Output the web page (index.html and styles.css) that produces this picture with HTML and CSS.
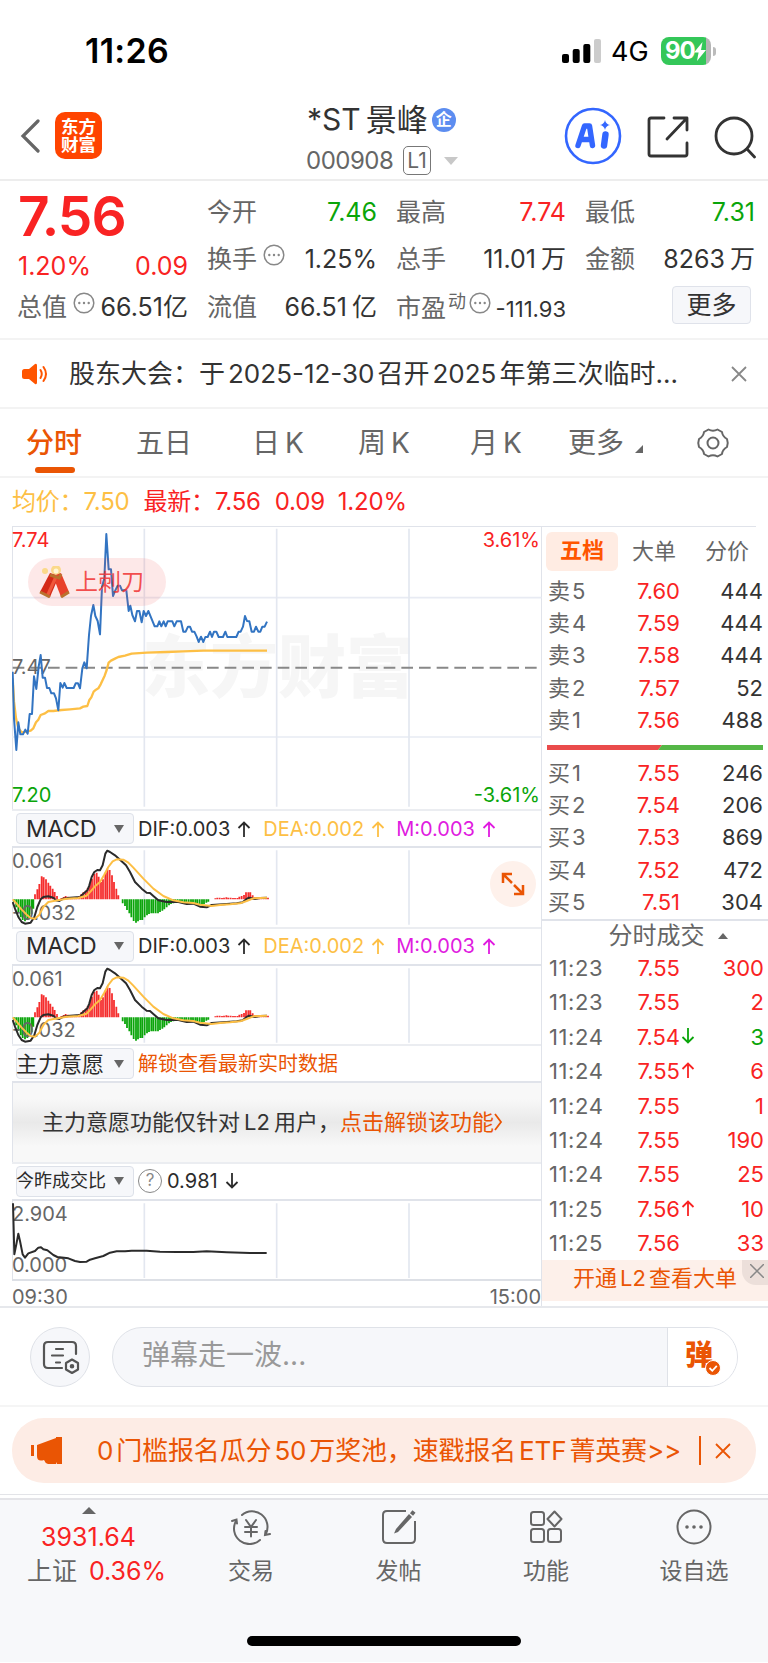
FILE: index.html
```html
<!doctype html>
<html lang="zh-CN">
<head>
    <meta charset="UTF-8">
    <title>*ST景峰 000908</title>
    <link rel="stylesheet" href="styles.css">
</head>
<body>

<!-- status bar -->
<div class="status">
    <span class="clock">11:26</span>
    <svg class="signal" width="39" height="24" viewBox="0 0 39 24">
        <rect x="0" y="15" width="7" height="9" rx="2"/>
        <rect x="10.7" y="10" width="7" height="14" rx="2"/>
        <rect x="21.3" y="5" width="7" height="19" rx="2"/>
        <rect x="32" y="0" width="7" height="24" rx="2" fill="#ccc"/>
    </svg>
    <span class="net">4G</span>
    <div class="battery">
        <b>90</b>
        <svg width="12" height="19" viewBox="0 0 12 19"><path d="M8.5 0L0 10.5h4.6L3 19l9-11H7z" fill="#fff"/></svg>
    </div>
    <i class="nub"></i>
</div>

<!-- title bar -->
<div class="header">
    <svg class="back" width="20" height="34" viewBox="0 0 20 34"><path d="M18 2L3 17l15 15" fill="none" stroke="#666" stroke-width="3.2" stroke-linecap="round"/></svg>
    <div class="logo">东方<br>财富</div>
    <div class="stock">
        <div class="name"><span>*ST</span><span class="cn">景峰</span><em>企</em></div>
        <div class="code"><span>000908</span><i>L1</i><b></b></div>
    </div>
    <div class="tools">
        <svg width="58" height="58" viewBox="0 0 58 58">
            <circle cx="29" cy="29" r="27" fill="none" stroke="#36f" stroke-width="2.6"/>
            <path d="M14 38.5L20.5 19h5l3 19.5M17.5 32.5h9" fill="none" stroke="#36f" stroke-width="5.4" stroke-linejoin="round" stroke-linecap="round"/>
            <path d="M41.5 27.5L40 38.5" stroke="#36f" stroke-width="6.4" stroke-linecap="round"/>
            <path d="M41 13q.8 4.200 5 5q-4.200.8-5 5q-.8-4.200-5-5q4.200-.8 5-5z" fill="#36f"/>
        </svg>
        <svg class="share" width="42" height="42" viewBox="0 0 42 42" fill="none" stroke="#333" stroke-width="2.8" stroke-linecap="round" stroke-linejoin="round">
            <path d="M17 2H4q-2 0-2 2v34q0 2 2 2h34q2 0 2-2V27M27 2h13v12M39 3L20 23"/>
        </svg>
        <svg class="search" width="42" height="44" viewBox="0 0 42 44" fill="none" stroke="#333" stroke-width="2.8" stroke-linecap="round">
            <circle cx="20" cy="20" r="18"/><path d="M33 33l7.500 8"/>
        </svg>
    </div>
</div>

<!-- quote -->
<div class="quote">
    <div class="main-price">
        <div class="price red">7.56</div>
        <div class="change red"><span>1.20%</span><span>0.09</span></div>
        <div class="cell"><label>总值</label><svg class="tip"><use href="#dots"/></svg><span>66.51<u>亿</u></span></div>
    </div>
    <div class="cells">
        <div class="cell"><label>今开</label><span class="green">7.46</span></div>
        <div class="cell"><label>最高</label><span class="red">7.74</span></div>
        <div class="cell"><label>最低</label><span class="green">7.31</span></div>
        <div class="cell"><label>换手</label><svg class="tip"><use href="#dots"/></svg><span>1.25%</span></div>
        <div class="cell"><label>总手</label><span>11.01<u>万</u></span></div>
        <div class="cell"><label>金额</label><span>8263<u>万</u></span></div>
        <div class="cell"><label>流值</label><span>66.51<u>亿</u></span></div>
        <div class="cell pe"><label>市盈<sup>动</sup></label><svg class="tip"><use href="#dots"/></svg><span>-111.93</span></div>
        <div class="cell"><button class="more">更多</button></div>
    </div>
</div>

<!-- notice -->
<div class="notice">
    <svg width="26" height="22" viewBox="0 0 26 22"><path d="M2.500 6H7l6-5q2-1 2 1.500v17q0 2.500-2 1.500l-6-5H2.500Q0 16 0 13.500v-5Q0 6 2.500 6z" fill="#ff5500"/><path d="M18.500 7q2.500 4 0 8M21.500 4q5 7 0 14" fill="none" stroke="#ff5500" stroke-width="2" stroke-linecap="round"/></svg>
    <p>股东大会：于<s></s>2025-12-30<s></s>召开<s></s>2025<s></s>年第三次临时...</p>
    <svg class="x" width="16" height="16" viewBox="0 0 16 16"><path d="M1 1l14 14M15 1L1 15" stroke="#888" stroke-width="1.8"/></svg>
</div>

<!-- period tabs -->
<div class="tabs">
    <span class="on">分时</span>
    <span>五日</span>
    <span>日<s></s>K</span>
    <span>周<s></s>K</span>
    <span>月<s></s>K</span>
    <span class="drop">更多</span>
    <svg width="34" height="32" viewBox="0 0 34 32" fill="none" stroke="#666" stroke-width="2">
        <path d="M12.500 2.500Q17 5 21.500 2.500L26 5Q26.500 9.500 31 12Q32.500 16 31 20Q26.500 22.500 26 27L21.500 29.500Q17 27 12.500 29.500L8 27Q7.500 22.500 3 20Q1.500 16 3 12Q7.500 9.500 8 5z" stroke-linejoin="round"/>
        <circle cx="17" cy="16" r="5.5"/>
    </svg>
</div>

<div class="info">
    <span class="avg">均价：</span><span class="avg n1">7.50</span>
    <span class="red n2">最新：</span><span class="red n3">7.56</span>
    <span class="red n4">0.09</span><span class="red n5">1.20%</span>
</div>

<div class="board">
    <div class="charts">
        <!-- minute line -->
        <div class="chart minute">
            <div class="watermark">东方财富</div>
            <svg width="530" height="282" viewBox="36 36 1590 846" fill="none">
                <path d="M36 248H1625M36 666H1625" stroke="#e8ebf3" stroke-width="5"/>
                <path d="M433 41V875M830 41V875M1227 41V875" stroke="#e3e7f0" stroke-width="5"/>
                <path d="M38 458H1615" stroke="#888" stroke-width="6" stroke-dasharray="35 18"/>
            </svg>
            <span class="lab tl red">7.74</span><span class="lab tr red">3.61%</span>
            <span class="lab mid">7.47</span>
            <span class="lab bl green">7.20</span><span class="lab br green">-3.61%</span>
            <svg width="530" height="282" viewBox="36 36 1590 846" fill="none" stroke-linejoin="round">
                <path stroke="#fdbf45" stroke-width="7" d="M38 490L42 560 48 610 55 640 65 652 80 650 92 647 100 640 108 622 115 614 122 600 135 595 145 588 160 588 185 585 210 583 240 580 250 575 262 573 268 555 274 547 281 530 288 524 295 520 302 508 308 495 314 482 320 465 326 443 333 437 345 431 355 426 375 422 395 416 440 413 500 411 550 409 610 407 801 407"/>
                <path stroke="#3274c2" stroke-width="6" d="M38 470L42 610 49 705 55 622 61 658 69 658 76 644 83 656 89 597 96 597 102 484 109 522 116 455 122 420 128 488 135 488 141 519 148 519 154 535 162 535 168 550 175 586 181 504 188 518 193 504 200 519 221 519 227 505 234 505 240 520 247 460 253 442 260 460 267 360 273 303 280 270 286 303 293 318 300 358 306 215 313 190 319 57 326 163 333 163 339 243 346 226 353 212 360 212 366 226 379 226 386 288 391 272 397 300 405 319 411 288 418 288 425 322 431 288 438 303 445 288 452 305 464 334 472 334 478 319 484 334 491 319 497 334 503 319 517 319 523 334 530 319 543 319 550 350 557 350 564 335 570 335 576 350 583 350 590 365 596 381 603 365 610 381 616 366 623 366 630 350 636 366 642 350 649 350 656 366 669 366 676 350 682 366 709 366 716 350 722 350 729 335 735 303 741 318 748 319 755 350 762 350 768 335 775 350 781 350 787 335 794 335 801 320"/>
            </svg>
            <div class="signal-tag">
                <svg width="31" height="32" viewBox="0 0 31 32">
                    <g fill="#fbd98a"><circle cx="6" cy="5" r="3"/><circle cx="17" cy="4" r="5"/></g>
                    <circle cx="17" cy="5" r="2.5" fill="#fff7d8"/>
                    <path d="M11 7l9 3-9 21-10-5z" fill="#d42a18"/><path d="M14 10l8-3 8 19-8 5z" fill="#e8402a"/>
                    <path d="M16 9l3 1-9 20-3-1z" fill="#f0583c"/>
                    <path d="M1 26l10 5M30 26l-8 5M11 9l9 3 2-4" stroke="#b9722e" stroke-width="3" fill="none"/>
                </svg>
                <span>上刺刀</span>
            </div>
        </div>

        <div class="bar">
            <div class="pick">MACD</div>
            <span class="v dif">DIF:0.003 <svg class="arr"><use href="#up"/></svg></span>
            <span class="v dea">DEA:0.002 <svg class="arr"><use href="#up"/></svg></span>
            <span class="v m">M:0.003 <svg class="arr"><use href="#up"/></svg></span>
        </div>
        <div class="chart">
            <svg width="530" height="78" viewBox="36 128 1590 234"><use href="#macd-grid"/><use href="#macd"/></svg>
            <span class="lab tl">0.061</span><span class="lab bl">-0.032</span>
            <svg width="530" height="78" viewBox="36 128 1590 234"><use href="#macd-lines"/></svg>
            <div class="expand"><svg width="24" height="24" viewBox="0 0 24 24" fill="none" stroke="#ea5504" stroke-width="2.5"><path d="M11 2H2v9M2 2l9 9M13 22h9v-9M22 22l-9-9"/></svg></div>
        </div>

        <div class="bar">
            <div class="pick">MACD</div>
            <span class="v dif">DIF:0.003 <svg class="arr"><use href="#up"/></svg></span>
            <span class="v dea">DEA:0.002 <svg class="arr"><use href="#up"/></svg></span>
            <span class="v m">M:0.003 <svg class="arr"><use href="#up"/></svg></span>
        </div>
        <div class="chart">
            <svg width="530" height="78" viewBox="36 128 1590 234"><use href="#macd-grid"/><use href="#macd"/></svg>
            <span class="lab tl">0.061</span><span class="lab bl">-0.032</span>
            <svg width="530" height="78" viewBox="36 128 1590 234"><use href="#macd-lines"/></svg>
        </div>

        <div class="bar">
            <div class="pick cn">主力意愿</div>
            <span class="unlock">解锁查看最新实时数据</span>
        </div>
        <div class="chart locked">
            <span>主力意愿功能仅针对<s></s>L2<s></s>用户，</span><a>点击解锁该功能</a>
            <svg width="9" height="18" viewBox="0 0 9 18"><path d="M1 1l6 8-6 8" fill="none" stroke="#ea5504" stroke-width="1.8"/></svg>
        </div>

        <div class="bar">
            <div class="pick small">今昨成交比</div>
            <div class="ask">?</div>
            <span class="v ratio">0.981 <svg class="arr"><use href="#down"/></svg></span>
        </div>
        <div class="chart">
            <svg width="530" height="79" viewBox="36 480 1590 237" fill="none">
                <path d="M433 487V711M830 487V711M1227 487V711" stroke="#e3e7f0" stroke-width="5"/>
            </svg>
            <span class="lab tl">2.904</span><span class="lab bl">0.000</span>
            <svg width="530" height="79" viewBox="36 480 1590 237" fill="none" stroke-linejoin="round">
                <path stroke="#2b2b2b" stroke-width="6" d="M39 487L43 640 49 610 55 578 60 600 68 640 75 650 85 637 105 630 115 620 123 619 130 625 142 628 160 642 172 648 205 652 225 660 240 663 260 662 270 656 285 652 310 645 330 635 350 631 375 631 395 629 440 629 480 632 530 633 580 633 620 631 680 634 750 636 800 636"/>
            </svg>
        </div>
        <div class="axis"><span>09:30</span><span>15:00</span></div>
    </div>

    <div class="side">
        <div class="side-tabs"><b>五档</b><span>大单</span><span>分价</span></div>
        <div class="book">
            <div><i>卖<s></s>5</i><span>7.60</span><em>444</em></div>
            <div><i>卖<s></s>4</i><span>7.59</span><em>444</em></div>
            <div><i>卖<s></s>3</i><span>7.58</span><em>444</em></div>
            <div><i>卖<s></s>2</i><span>7.57</span><em>52</em></div>
            <div><i>卖<s></s>1</i><span>7.56</span><em>488</em></div>
        </div>
        <svg class="ratio-bar" width="216" height="5" viewBox="0 0 216 5"><path d="M0 0H115L111 5H0z" fill="#ea4b4b"/><path d="M115 0H216V5H111z" fill="#55b747"/></svg>
        <div class="book">
            <div><i>买<s></s>1</i><span>7.55</span><em>246</em></div>
            <div><i>买<s></s>2</i><span>7.54</span><em>206</em></div>
            <div><i>买<s></s>3</i><span>7.53</span><em>869</em></div>
            <div><i>买<s></s>4</i><span>7.52</span><em>472</em></div>
            <div><i>买<s></s>5</i><span>7.51</span><em>304</em></div>
        </div>
        <div class="deal-title">分时成交<b></b></div>
        <div class="book deals">
            <div><i>11:23</i><span>7.55</span><em>300</em></div>
            <div><i>11:23</i><span>7.55</span><em>2</em></div>
            <div><i>11:24</i><span>7.54<svg class="arr green"><use href="#down"/></svg></span><em class="green">3</em></div>
            <div><i>11:24</i><span>7.55<svg class="arr"><use href="#up"/></svg></span><em>6</em></div>
            <div><i>11:24</i><span>7.55</span><em>1</em></div>
            <div><i>11:24</i><span>7.55</span><em>190</em></div>
            <div><i>11:24</i><span>7.55</span><em>25</em></div>
            <div><i>11:25</i><span>7.56<svg class="arr"><use href="#up"/></svg></span><em>10</em></div>
            <div><i>11:25</i><span>7.56</span><em>33</em></div>
        </div>
        <div class="l2">开通<s></s>L2<s></s>查看大单
            <div class="l2-close"><svg width="14" height="14" viewBox="0 0 14 14"><path d="M0 0l14 14M14 0L0 14" stroke="#888" stroke-width="1.5"/></svg></div>
        </div>
    </div>
</div>

<!-- barrage input -->
<div class="barrage">
    <div class="round">
        <svg width="38" height="34" viewBox="0 0 38 34" fill="none" stroke="#555" stroke-width="2.2" stroke-linecap="round">
            <path d="M20 28H6q-4 0-4-4V6q0-4 4-4h24q4 0 4 4v8M14 9h7M10 15.500h11M14 22.500h4"/>
            <path d="M30 19.500l6 3.500v6.500L30 33l-6-3.500V23z" stroke-linejoin="round"/><circle cx="30" cy="26.3" r="1.2"/>
        </svg>
    </div>
    <div class="field">
        <span>弹幕走一波...</span>
        <div class="send">弹<svg width="16" height="16" viewBox="0 0 16 16"><circle cx="8" cy="8" r="7.5" fill="#ea5504" stroke="#fff"/><path d="M4.500 8l2.800 2.800 4.500-5" fill="none" stroke="#fff" stroke-width="1.8"/></svg></div>
    </div>
</div>

<div class="promo-wrap">
    <div class="promo">
        <svg width="31" height="27" viewBox="0 0 31 27" fill="#ea5504"><path d="M0 8h3v11H0zM6 8l19-7V0h6v27h-5l-1-2v2q-10 2-12-4-7 2-7-4z"/></svg>
        <p>0<s></s>门槛报名瓜分<s></s>50<s></s>万奖池，速戳报名<s></s>ETF<s></s>菁英赛&gt;&gt;</p>
        <i></i>
        <svg class="x" width="16" height="16" viewBox="0 0 16 16"><path d="M1 1l14 14M15 1L1 15" stroke="#ea5504" stroke-width="1.8"/></svg>
    </div>
</div>

<!-- bottom nav -->
<div class="nav">
    <div class="index"><b></b><span class="red">3931.64</span><p>上证<span class="red">0.36%</span></p></div>
    <div class="item">
        <svg width="40" height="36" viewBox="0 0 40 36" fill="none" stroke="#666" stroke-width="2" stroke-linecap="round">
            <path d="M11 6A15.500 15.500 0 0 1 35 24.500M39 25l-5 1 .5-4M29 31A15.500 15.500 0 0 1 5 12M1 12l4.500-1.500.500 4"/>
            <path d="M15 11l5 7 5-7M14 18h12M14 23h12M20 18v9.500"/>
        </svg>
        <span>交易</span>
    </div>
    <div class="item">
        <svg width="36" height="36" viewBox="0 0 36 36" fill="none" stroke="#666" stroke-width="2">
            <path d="M25 2H6Q2 2 2 6v24q0 4 4 4h24q4 0 4-4V12"/>
            <path d="M28 5l3 3-14 15-4 1.500 2-4.500z" fill="#666" stroke="none"/><path d="M30.500 5.500l2.500-3" stroke-width="4"/>
        </svg>
        <span>发帖</span>
    </div>
    <div class="item">
        <svg width="34" height="36" viewBox="0 0 34 36" fill="none" stroke="#666" stroke-width="2">
            <rect x="2" y="3" width="13" height="13" rx="2.5"/><rect x="2" y="20" width="13" height="13" rx="2.5"/><rect x="19" y="20" width="13" height="13" rx="2.5"/>
            <path d="M25.500 2.500l7 7.500-7 7.500-7-7.500z" stroke-linejoin="round"/>
        </svg>
        <span>功能</span>
    </div>
    <div class="item">
        <svg width="36" height="36" viewBox="0 0 36 36" fill="none" stroke="#666" stroke-width="2">
            <circle cx="18" cy="18" r="16.5"/><path d="M11 18h.01M18 18h.01M25 18h.01" stroke-width="3.6" stroke-linecap="round"/>
        </svg>
        <span>设自选</span>
    </div>
    <div class="home"></div>
</div>

<!-- shared shapes -->
<svg class="defs">
    <symbol id="dots" viewBox="0 0 22 22"><circle cx="11" cy="11" r="9.8" fill="none" stroke="#888" stroke-width="1.5"/><path d="M6.300 11h.01M11 11h.01M15.700 11h.01" stroke="#888" stroke-width="2.4" stroke-linecap="round"/></symbol>
    <symbol id="up" viewBox="0 0 14 16"><path d="M7 16V1.500M1.500 7L7 1.500 12.500 7" fill="none" stroke="currentColor" stroke-width="1.8"/></symbol>
    <symbol id="down" viewBox="0 0 14 16"><path d="M7 0V14.500M1.500 9L7 14.500 12.500 9" fill="none" stroke="currentColor" stroke-width="1.8"/></symbol>
    <g id="macd-grid"><path d="M433 135V358M830 135V358M1227 135V358" stroke="#e3e7f0" stroke-width="5"/></g>
    <g id="macd" fill="none">
        <path stroke="#0aa50a" stroke-width="5.4" d="M42 282v8M48.600 282v24M55 282v40M62 282v54M68 282v62M75 282v66M82 282v62M88 282v56M95 282v45M100 282v28M368 282v12M375 282v20M381 282v32M388 282v42M394 282v54M401 282v65M408 282v70M414 282v66M421 282v62M427 282v62M434 282v54M441 282v48M447 282v44M454 282v42M460 282v42M467 282v42M474 282v42M480 282v38M487 282v34M493 282v30M500 282v24M507 282v18M513 282v14M520 282v12M526 282v10M533 282v9M540 282v9M546 282v9M553 282v10M559 282v12M566 282v12M573 282v13M579 282v14M586 282v17M592 282v18M599 282v18M606 282v18M612 282v14M619 282v10M625 282v7"/>
        <path stroke="#f52d2d" stroke-width="5.4" d="M105 282v-15M112 282v-30M118 282v-46M125 282v-69M131 282v-66M138 282v-60M145 282v-50M151 282v-41M158 282v-32M164 282v-22M171 282v-10M184 282v-4M191 282v-7M197 282v-10M204 282v-8M211 282v-7M217 282v-6M224 282v-6M230 282v-7M237 282v-10M244 282v-16M250 282v-21M257 282v-26M263 282v-34M270 282v-48M276 282v-62M283 282v-76M290 282v-80M296 282v-68M303 282v-52M309 282v-60M316 282v-80M322 282v-92M329 282v-88M336 282v-72M342 282v-52M349 282v-32M355 282v-12M646 282v-3M652 282v-5M659 282v-5M666 282v-4M672 282v-5M679 282v-6M685 282v-5M692 282v-5M699 282v-4M705 282v-4M712 282v-4M718 282v-8M725 282v-10M732 282v-13M738 282v-21M745 282v-21M751 282v-21M758 282v-12M765 282v-6M771 282v-6M778 282v-7M784 282v-6M791 282v-5M798 282v-6M804 282v-5"/>
    </g>
    <g id="macd-lines" fill="none" stroke-linejoin="round" stroke-width="6">
        <path stroke="#2b2b2b" d="M38 290L45 310 55 335 65 350 75 355 92 352 103 335 112 305 122 282 130 275 145 273 160 277 168 285 178 287 190 280 210 277 240 275 250 265 262 255 268 240 275 215 283 200 292 194 300 195 308 180 316 145 322 136 330 140 345 150 360 163 378 180 390 200 405 230 425 250 440 262 450 263 460 272 475 285 500 290 535 290 560 296 580 295 600 304 620 306 635 299 680 296 710 294 728 291 737 283 747 277 765 281 780 278 801 277"/>
        <path stroke="#fdbf45" d="M38 282L50 295 65 313 80 328 92 338 105 340 118 328 130 305 145 290 165 286 200 280 235 278 260 271 272 258 285 243 300 230 312 210 325 185 338 168 350 162 370 163 385 172 400 187 430 220 460 250 490 272 520 285 550 291 580 293 600 298 635 302 660 299 690 297 720 294 740 287 760 279 801 277"/>
    </g>
</svg>

</body>
</html>
```

FILE: styles.css
```css
* {
    box-sizing: border-box;
}
body {
    margin: 0;
    width: 768px;
    height: 1663px;
    overflow: hidden;
    background: #fff;
    color: #333;
    font-family: Inter, "Noto Sans CJK SC", sans-serif;
    font-size: 25px;
    line-height: 1;
}
p {
    margin: 0;
}
i, em {
    font-style: normal;
}
u, s {
    text-decoration: none;
}
/* thin gap between chinese and latin text */
s {
    display: inline-block;
    width: 3px;
}
svg {
    display: block;
    flex: none;
}
.defs {
    width: 0;
    height: 0;
}
.red { color: #f92323; }
.green { color: #0aa50a; }

/* status bar */
.status {
    display: flex;
    align-items: center;
    height: 96px;
    padding: 6px 0 0 85px;
    color: #000;
}
.clock {
    width: 477px;
    font-size: 34px;
    font-weight: 600;
    letter-spacing: 0.3px;
}
.net {
    width: 37px;
    margin: 1px 13px 0 10px;
    font-size: 27px;
}
.battery {
    display: flex;
    align-items: center;
    width: 50px;
    height: 28px;
    padding-left: 4px;
    border-radius: 8px;
    background: linear-gradient(90deg, #34c759 45px, #b5b5b5 45px);
    color: #fff;
    font-size: 24px;
    letter-spacing: -1.2px;
}
.nub {
    width: 3px;
    height: 9px;
    margin-left: 2px;
    border-radius: 0 4px 4px 0;
    background: #bbb;
}

/* title bar */
.header {
    display: grid;
    grid-template-columns: 34px 252px 276px 1fr;
    height: 85px;
    padding-left: 20px;
    border-bottom: 2px solid #ededed;
}
.back {
    margin-top: 23px;
}
.logo {
    width: 47px;
    height: 47px;
    margin: 16px 0 0 1px;
    padding-top: 6px;
    border-radius: 10px;
    background: #ff4400;
    color: #fff;
    font-size: 17.5px;
    font-weight: 700;
    line-height: 18px;
    text-align: center;
}
.name {
    display: flex;
    align-items: center;
    height: 46px;
    padding: 0 0 0 1px;
    font-size: 30px;
}
.name .cn {
    margin-left: 5px;
    font-size: 31px;
}
.name em {
    width: 24px;
    height: 24px;
    margin: 1px 0 0 4px;
    border-radius: 50%;
    background: #5c8df0;
    color: #fff;
    font-size: 16px;
    font-weight: 700;
    line-height: 23px;
    text-align: center;
}
.code {
    display: flex;
    align-items: center;
    height: 37px;
    color: #666;
    font-size: 24px;
}
.code span {
    width: 97px;
    letter-spacing: -0.5px;
}
.code i {
    width: 28px;
    height: 29px;
    border: 1.5px solid #777;
    border-radius: 5px;
    font-size: 21px;
    line-height: 27px;
    text-align: center;
}
.code b {
    margin-left: 13px;
    border: 7px solid transparent;
    border-top: 8px solid #c8c8c8;
    border-bottom: 0;
}
.tools {
    display: flex;
    margin: 11px 0 0 -18px;
}
.tools .share { margin: 9px 0 0 25px; }
.tools .search { margin: 9px 0 0 25px; }

/* quote */
.quote {
    display: flex;
    gap: 20px;
    height: 159px;
    padding: 7px 13px 0 18px;
    border-bottom: 2px solid #f3f3f3;
}
.main-price {
    width: 170px;
}
.price {
    height: 54px;
    font-size: 55px;
    font-weight: 600;
    line-height: 56px;
    letter-spacing: -1px;
}
.change {
    display: flex;
    justify-content: space-between;
    height: 41px;
    padding-top: 12px;
}
.cells {
    display: grid;
    grid-template-columns: 169px 169px 169px;
    grid-auto-rows: 47.5px;
    column-gap: 20px;
}
.cell {
    display: flex;
    align-items: center;
    height: 48px;
    white-space: nowrap;
}
.cell label {
    margin-left: -1px;
    color: #666;
}
.cell span {
    margin-left: auto;
}
.cells u {
    margin-left: 5px;
}
.tip {
    width: 22px;
    height: 22px;
    margin: -9px 0 0 6px;
}
.pe sup {
    display: inline-block;
    margin-left: 2px;
    font-size: 18px;
    line-height: 18px;
    vertical-align: 9px;
}
.pe .tip {
    margin-left: 3px;
}
.pe span {
    padding-top: 4px;
    font-size: 22px;
}
.more {
    width: 79px;
    height: 38px;
    margin: -4px 4px 0 auto;
    padding: 0;
    border: 1.5px solid #dfe2ea;
    border-radius: 4px;
    background: #f6f7fa;
    color: #333;
    font: inherit;
}

/* notice */
.notice {
    display: flex;
    align-items: center;
    height: 69px;
    padding-left: 22px;
    border-bottom: 2px solid #f3f3f3;
    font-size: 26px;
}
.notice p {
    width: 683px;
    padding-left: 21px;
    white-space: nowrap;
}

/* period tabs */
.tabs {
    display: grid;
    grid-template-columns: 110px 116px 106px 112px 98px 128px auto;
    align-items: center;
    height: 69px;
    padding-left: 26px;
    border-bottom: 2px solid #f3f3f3;
    color: #666;
    font-size: 28px;
}
.tabs s {
    width: 5px;
}
.tabs .on {
    position: relative;
    color: #ea5504;
    font-weight: 500;
}
.tabs .on::after {
    content: "";
    position: absolute;
    left: 9px;
    top: 38px;
    width: 40px;
    height: 6px;
    border-radius: 3px;
    background: #ea5504;
}
.drop::after {
    content: "";
    display: inline-block;
    margin-left: 11px;
    border: 4px solid #666;
    border-top-color: transparent;
    border-left-color: transparent;
}

.info {
    display: flex;
    align-items: center;
    height: 49px;
    margin: 0 12px;
    border-bottom: 1.5px solid #e0e3ea;
    font-size: 24px;
    white-space: nowrap;
    letter-spacing: -0.2px;
}
.avg { color: #fdbf45; }
.info .n2 { margin-left: 14px; }
.info .n4 { margin-left: 14px; }
.info .n5 { margin-left: 13px; }

/* charts */
.board {
    display: flex;
    height: 781px;
    padding-left: 12px;
    border-bottom: 2px solid #e6e8ec;
}
.charts {
    width: 529px;
}
.chart {
    position: relative;
    height: 78.5px;
    border-left: 1px solid #e0e3ea;
}
.chart > svg {
    position: absolute;
    left: -1px;
    top: 0;
}
.minute {
    height: 282px;
}
.lab {
    position: absolute;
    color: #666;
    font-size: 20px;
}
.lab.red { color: #f92323; }
.lab.green { color: #0aa50a; }
.tl { left: -1px; top: 3px; }
.tr { right: 1px; top: 3px; }
.mid { left: -1px; top: 130px; }
.bl { left: -1px; bottom: 4px; }
.br { right: 1px; bottom: 4px; }
.watermark {
    position: absolute;
    left: 129px;
    top: 106px;
    color: #f6f6f6;
    font-size: 68px;
    font-weight: 900;
}
.signal-tag {
    position: absolute;
    left: 15px;
    top: 31px;
    display: flex;
    align-items: center;
    gap: 5px;
    width: 138px;
    height: 48px;
    padding-left: 11px;
    border-radius: 24px;
    background: rgba(240, 80, 80, 0.13);
    color: rgba(240, 50, 50, 0.85);
    font-size: 23px;
}
.bar {
    display: flex;
    align-items: center;
    height: 39px;
    padding-left: 4px;
    border-top: 2px solid #ebedf1;
    border-bottom: 2px solid #e0e3ea;
    color: #2b2b2b;
    font-size: 20px;
}
.pick {
    display: flex;
    align-items: center;
    justify-content: space-between;
    width: 118px;
    height: 31px;
    padding: 0 9px;
    border: 1.5px solid #dde1e9;
    border-radius: 4px;
    background: #f6f7fa;
    font-size: 23.5px;
    white-space: nowrap;
}
.pick::after {
    content: "";
    border: 5px solid transparent;
    border-top: 8px solid #666;
    border-bottom: 0;
}
.pick.cn {
    padding-left: 0;
    font-size: 22px;
    text-indent: -1px;
}
.pick.small {
    padding-left: 0;
    font-size: 18px;
    text-indent: -1px;
}
.v {
    display: flex;
    align-items: center;
    margin-left: 4px;
    white-space: nowrap;
}
.arr {
    width: 14px;
    height: 16px;
}
.v .arr {
    margin-left: 7px;
}
.dea { margin-left: 12px; color: #fdbf45; }
.m { margin-left: 11px; color: #e01be0; }
.ratio { margin-left: 5px; }
.expand {
    position: absolute;
    left: 477px;
    top: 13px;
    display: flex;
    align-items: center;
    justify-content: center;
    width: 46px;
    height: 46px;
    border-radius: 50%;
    background: #fef1eb;
}
.unlock {
    margin-left: 4px;
    color: #ea5504;
}
.locked {
    display: flex;
    align-items: center;
    padding-left: 29px;
    background: linear-gradient(#f8f8f8 20%, #e9e9e9 50%, #f8f8f8 80%);
    font-size: 22px;
    white-space: nowrap;
}
.locked s {
    width: 4px;
}
.locked a {
    color: #ea5504;
}
.locked > svg {
    position: static;
}
.ask {
    width: 24px;
    height: 24px;
    margin-left: 4px;
    border: 1.5px solid #888;
    border-radius: 50%;
    color: #888;
    font-size: 17px;
    line-height: 21px;
    text-align: center;
}
.axis {
    display: flex;
    justify-content: space-between;
    padding-top: 6px;
    border-top: 2px solid #dde0e6;
    color: #666;
    font-size: 20px;
}

/* order book */
.side {
    width: 227px;
    border-left: 1.5px solid #e0e3ea;
}
.side-tabs {
    display: flex;
    align-items: center;
    height: 48px;
    padding-left: 4px;
    color: #666;
    font-size: 22px;
}
.side-tabs b {
    width: 72px;
    height: 39px;
    border-radius: 6px;
    background: #ffece3;
    color: #ff5500;
    line-height: 37px;
    text-align: center;
}
.side-tabs span {
    width: 73px;
    padding-left: 14px;
}
.book div {
    display: grid;
    grid-template-columns: 82px 50px 83px;
    align-items: center;
    height: 32.2px;
    padding-left: 6px;
    font-size: 22px;
    text-align: right;
}
.book i {
    color: #666;
    text-align: left;
}
.book s {
    width: 2px;
}
.book span {
    position: relative;
    color: #f92323;
}
.book span .arr {
    position: absolute;
    left: 51px;
    top: 2px;
}
.ratio-bar {
    margin: 9px 0 7px 5px;
}
.deal-title {
    display: flex;
    align-items: center;
    justify-content: center;
    height: 32px;
    margin-top: 1px;
    padding-left: 26px;
    border-top: 2px solid #e0e3ea;
    color: #666;
    font-size: 24px;
}
.deal-title b {
    margin-left: 13px;
    border: 5px solid transparent;
    border-bottom: 6px solid #666;
    border-top: 0;
}
.deals div {
    grid-template-columns: 82px 50px 84px;
    height: 34.4px;
}
.deals i {
    padding-left: 1px;
    letter-spacing: 0.6px;
}
.deals em {
    color: #f92323;
}
.deals em.green, .book .arr.green {
    color: #0aa50a;
}
.l2 {
    position: relative;
    height: 41px;
    padding-left: 31px;
    background: #fdf0ea;
    color: #ea5504;
    font-size: 22px;
    line-height: 37px;
    white-space: nowrap;
}
.l2-close {
    position: absolute;
    right: 0;
    top: 0;
    width: 26px;
    height: 25px;
    padding: 4px 0 0 8px;
    border-radius: 0 0 0 14px;
    background: #ecdfda;
}

/* barrage */
.barrage {
    display: flex;
    height: 99px;
    padding: 19px 30px 0;
    border-bottom: 2px solid #f5f5f5;
}
.round {
    display: flex;
    align-items: center;
    justify-content: center;
    width: 60px;
    height: 60px;
    padding-left: 2px;
    margin-right: 22px;
    border: 1.5px solid #dfe2e8;
    border-radius: 50%;
    background: #f6f7fa;
}
.field {
    display: flex;
    width: 626px;
    height: 60px;
    overflow: hidden;
    border: 1.5px solid #dfe2e8;
    border-radius: 30px;
    background: #f6f7fa;
    color: #999;
    font-size: 28px;
    line-height: 54px;
}
.field span {
    flex: 1;
    padding-left: 29px;
}
.send {
    position: relative;
    width: 70px;
    padding-left: 17px;
    border-left: 1.5px solid #dfe2e8;
    background: #fff;
    color: #ea5504;
    font-weight: 900;
}
.send svg {
    position: absolute;
    left: 37px;
    top: 32px;
}

.promo-wrap {
    height: 91px;
    padding: 11px 12px 0;
    border-bottom: 3px solid #fff;
    box-shadow: inset 0 -1px #e3e4e8;
}
.promo {
    display: flex;
    align-items: center;
    height: 65px;
    padding-left: 19px;
    border-radius: 32px;
    background: #fdece5;
    color: #ea5504;
    font-size: 26px;
}
.promo p {
    width: 602px;
    padding-left: 35px;
    white-space: nowrap;
    letter-spacing: -0.15px;
}
.promo p + i {
    width: 2px;
    height: 29px;
    margin: 0 14px 0 35px;
    background: #ea5504;
}

/* bottom nav */
.nav {
    position: relative;
    display: grid;
    grid-template-columns: 177px 148px 147px 148px 148px;
    height: 164px;
    border-top: 2px solid #e4e4e8;
    background: #f7f8fa;
    color: #666;
    font-size: 23px;
    text-align: center;
}
.index {
    padding-top: 7px;
    font-size: 25px;
}
.index b {
    display: block;
    width: 0;
    margin: 0 auto 11px;
    border: 7px solid transparent;
    border-bottom: 7px solid #666;
    border-top: 0;
}
.index p {
    margin-top: 9px;
    padding-left: 16px;
}
.index p span {
    margin-left: 12px;
}
.item {
    padding-top: 9px;
}
.item svg {
    margin: 0 auto 15px;
}
.home {
    position: absolute;
    left: 247px;
    bottom: 16px;
    width: 274px;
    height: 10px;
    border-radius: 5px;
    background: #000;
}
```
